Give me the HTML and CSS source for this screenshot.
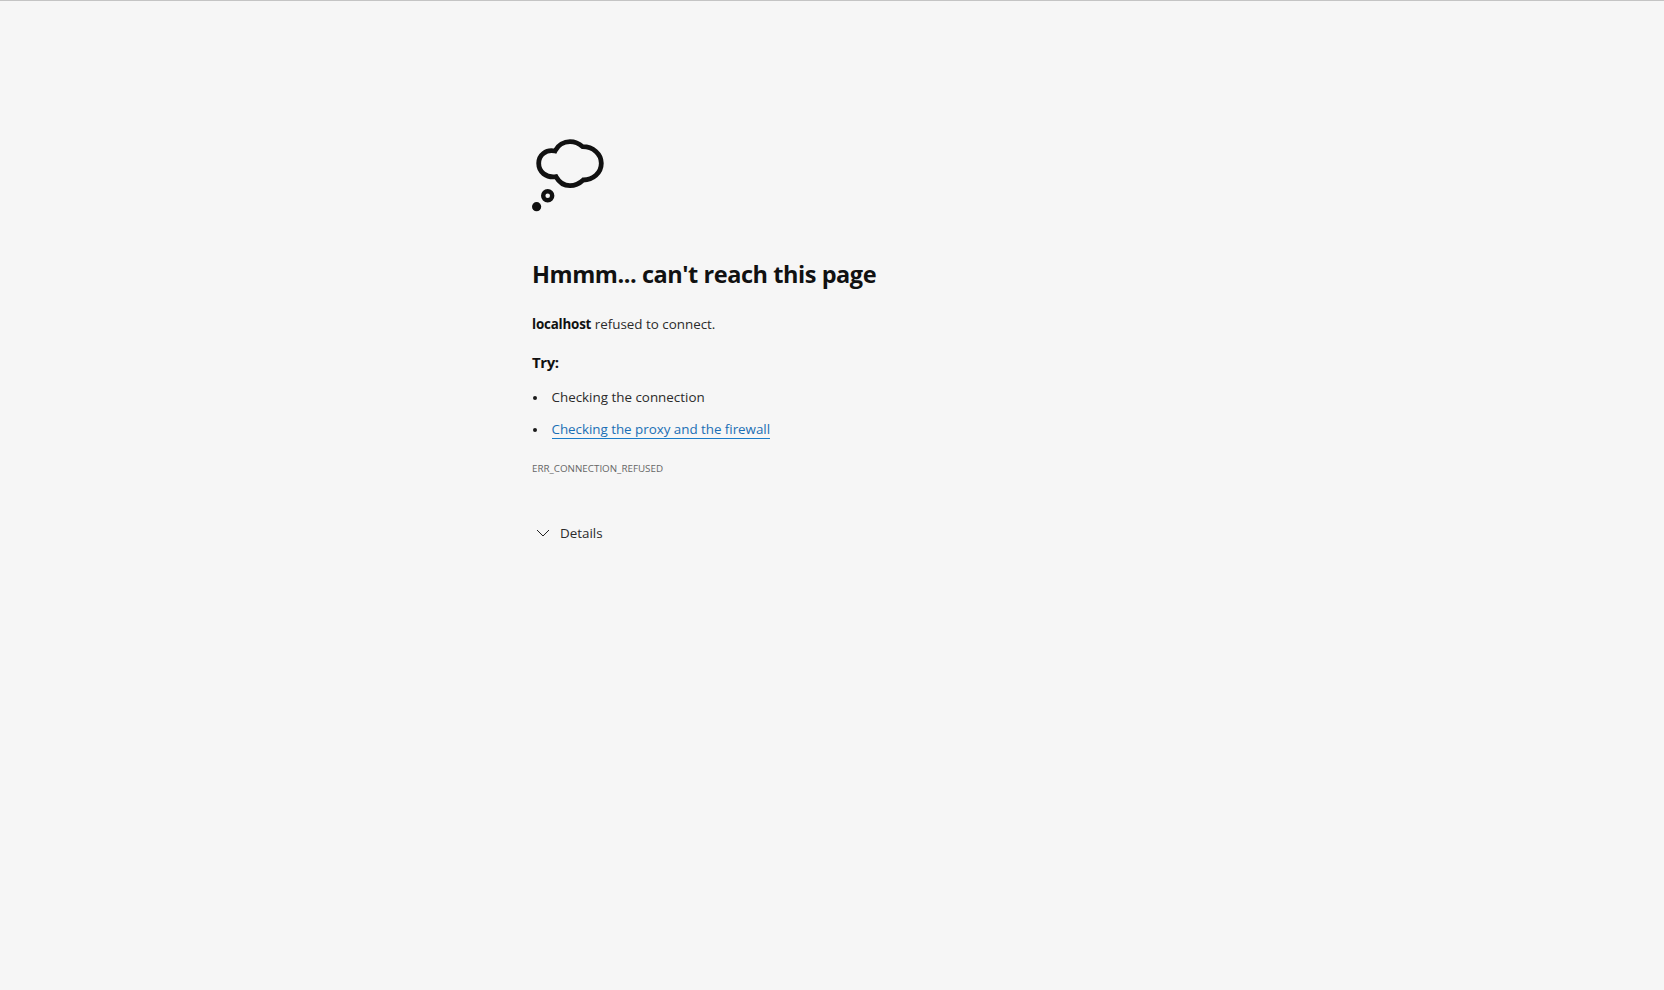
FILE: index.html
```html
<!DOCTYPE html>
<html>
  <head>
    <meta charset="utf-8" />
    <title>Can't reach this page</title>
    <link rel="stylesheet" href="styles.css">
  </head>

  <body>
    <div id="main">
      <svg class="cloud" width="72" height="73" viewBox="0 0 72 73">
        <path d="M23 12 C26 6 32 2.7 38 2.7 C43 2.7 47 4.5 50.7 7.7 C61 7.7 69.3 15 69.3 24.3 C69.3 34 61 41 51.3 41 C47.5 44.5 43 46.7 38 46.7 C32 46.7 27 43 24 37.7 C14 39 6.7 33 6.7 24.3 C6.7 16 14 10 23 12 Z" fill="none" stroke="#111" stroke-width="4.8"/>
        <circle cx="15.7" cy="56.7" r="4.5" fill="none" stroke="#111" stroke-width="4.4"/>
        <circle cx="4.6" cy="67.7" r="4.6" fill="#111"/>
      </svg>
      <h1>Hmmm... can't reach this page</h1>
      <p class="summary"><strong>localhost</strong> refused to connect.</p>
      <h2>Try:</h2>
      <ul>
        <li>Checking the connection</li>
        <li><a href="#">Checking the proxy and the firewall</a></li>
      </ul>
      <div class="code">ERR_CONNECTION_REFUSED</div>
      <button class="details" type="button">
        <svg width="14" height="8" viewBox="0 0 14 8"><path d="M1 1 L7 7 L13 1" fill="none" stroke="#222" stroke-width="1"/></svg>
        Details
      </button>
    </div>
  </body>
</html>
```

FILE: styles.css
```css
* {
    font-family: 'Open Sans', 'Noto Sans', sans-serif;
    box-sizing: border-box;
}

html, body {
    height: 100%;
}

body {
    margin: 0;
    background-color: #f6f6f6;
    border-top: 1px solid #c4c4c4;
    color: #2b2b2b;
    font-size: 13.4px;
}

#main {
    width: 600px;
    margin-left: 532px;
    padding-top: 138px;
}

.cloud {
    display: block;
}

h1 {
    margin: 46px 0 0;
    font-size: 23.5px;
    line-height: 32px;
    font-weight: 700;
    letter-spacing: -0.44px;
    color: #111;
}

.summary {
    margin: 24px 0 0;
    line-height: 20px;
}

.summary strong {
    letter-spacing: -0.2px;
    color: #111;
}

h2 {
    margin: 18px 0 0;
    font-size: 15px;
    line-height: 20px;
    font-weight: 700;
    letter-spacing: -0.4px;
    color: #111;
}

ul {
    list-style: none;
    margin: 15px 0 0;
    padding: 0;
}

li {
    position: relative;
    line-height: 20px;
    padding-left: 19.5px;
    margin-bottom: 12px;
}

li::before {
    content: "";
    position: absolute;
    left: 1px;
    top: 9px;
    width: 4px;
    height: 4px;
    border-radius: 50%;
    background-color: #1b1b1b;
}

a {
    color: #1a6fb5;
    text-decoration: none;
    letter-spacing: -0.03px;
    border-bottom: 1px solid #1a7cc8;
}

.code {
    margin-top: 22px;
    font-size: 9.8px;
    line-height: 16px;
    color: #666;
}

.details {
    display: flex;
    align-items: center;
    gap: 10px;
    margin-top: 46px;
    padding: 0 0 0 4px;
    background: none;
    border: none;
    font-size: 13.4px;
    line-height: 20px;
    color: #2b2b2b;
}
```
